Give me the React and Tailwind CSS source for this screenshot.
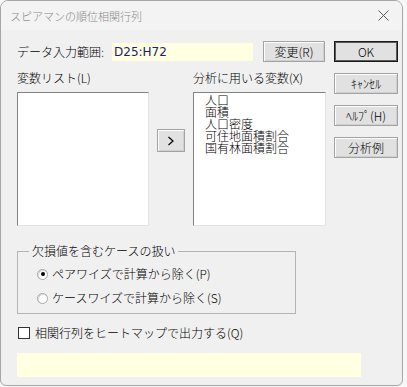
import React from 'react';

const Btn = ({ children, className = '', isDefault = false }) => (
  <div
    className={
      'flex items-center justify-center bg-[#e1e1e1] text-[12px] text-black ' +
      (isDefault
        ? 'border border-[#1a1a1a] shadow-[inset_0_0_0_1px_#5a5a5a] '
        : 'border border-[#a3a3a3] shadow-[inset_1px_1px_0_#fdfdfd,inset_-1px_-1px_0_#cfcfcf] ') +
      className
    }
  >
    {children}
  </div>
);

const ListBox = ({ items = [], className = '' }) => (
  <div
    className={
      'bg-white border-t border-l border-[#828282] border-r-[#e3e3e3] border-b-[#e3e3e3] border-r border-b pl-[11px] pt-[1px] ' +
      className
    }
  >
    {items.map((it) => (
      <div key={it} className="text-[12px] leading-[12px] text-black">
        {it}
      </div>
    ))}
  </div>
);

const Radio = ({ checked, label }) => (
  <div className="flex items-center h-[16px] gap-[4px]">
    <div className="w-[11px] h-[11px] rounded-full border border-[#a8a8a8] bg-white flex items-center justify-center shadow-[inset_1px_1px_0_#d8d8d8]">
      {checked && <div className="w-[4px] h-[4px] rounded-full bg-black" />}
    </div>
    <span className="text-[12px] leading-[16px]">{label}</span>
  </div>
);

export default function App() {
  const vars = ['人口', '面積', '人口密度', '可住地面積割合', '国有林面積割合'];

  return (
    <div className="w-[407px] h-[387px] bg-[#f7f7f7] font-[Noto_Sans_CJK_JP,sans-serif] font-light text-black">
      <div className="w-[403px] h-[386px] bg-[#f0f0f0] border border-[#a6a6a6] rounded-t-[8px] rounded-b-[6px] overflow-hidden">
        {/* title bar */}
        <div className="h-[29px] bg-[#f3f3f3] flex items-center justify-between pl-[9px] pr-[13px]">
          <span className="text-[11px] text-[#8a8a8a] leading-[16px]">スピアマンの順位相関行列</span>
          <svg width="11" height="11" viewBox="0 0 11 11">
            <path d="M0.5 0.5 L10.5 10.5 M10.5 0.5 L0.5 10.5" stroke="#5a5a5a" strokeWidth="1" />
          </svg>
        </div>

        <div className="pl-[16px]">
          <div className="flex pt-[11px]">
            {/* main column */}
            <div className="w-[309px]">
              <div className="flex items-center h-[21px]">
                <span className="w-[95px] text-[12px] leading-[16px]">データ入力範囲:</span>
                <div className="w-[141px] h-[18px] bg-[#ffffe1] flex items-center pl-[2px]">
                  <span className="font-[DejaVu_Sans,sans-serif] font-normal text-[12px] text-[#1c1c6c] leading-[16px]">D25:H72</span>
                </div>
                <Btn className="ml-[10px] w-[62px] h-[21px]">変更(R)</Btn>
              </div>

              <div className="flex mt-[8px] h-[16px] text-[12px] leading-[16px]">
                <span className="w-[176px]">変数リスト(L)</span>
                <span>分析に用いる変数(X)</span>
              </div>

              <div className="flex mt-[6px]">
                <ListBox className="w-[132px] h-[134px]" />
                <div className="w-[44px]">
                  <Btn className="ml-[8px] mt-[37px] w-[28px] h-[23px]">
                    <svg width="8" height="10" viewBox="0 0 8 10">
                      <path d="M1.5 1 L6 5 L1.5 9" stroke="#000" strokeWidth="1.2" fill="none" />
                    </svg>
                  </Btn>
                </div>
                <ListBox items={vars} className="w-[133px] h-[134px]" />
              </div>
            </div>

            {/* right buttons */}
            <div className="ml-[8px] w-[64px] flex flex-col gap-[11px]">
              <Btn isDefault className="h-[21px]">OK</Btn>
              <Btn className="h-[21px]">ｷｬﾝｾﾙ</Btn>
              <Btn className="h-[21px]">ﾍﾙﾌﾟ(H)</Btn>
              <Btn className="h-[21px]">分析例</Btn>
            </div>
          </div>

          {/* group box */}
          <div className="relative mt-[25px] w-[279px] h-[63px] border border-[#b4b4b4] pl-[19px] pt-[14px] flex flex-col gap-[8px]">
            <span className="absolute -top-[9px] left-[11px] px-[3px] bg-[#f0f0f0] text-[12px] leading-[16px]">
              欠損値を含むケースの扱い
            </span>
            <Radio checked label="ペアワイズで計算から除く(P)" />
            <Radio label="ケースワイズで計算から除く(S)" />
          </div>

          {/* checkbox */}
          <div className="flex items-center h-[16px] mt-[11px] gap-[5px]">
            <div className="ml-[1px] w-[12px] h-[12px] bg-white border border-[#333333]" />
            <span className="text-[12px] leading-[16px]">相関行列をヒートマップで出力する(Q)</span>
          </div>

          {/* status bar */}
          <div className="mt-[12px] w-[344px] h-[24px] bg-[#ffffe1]" />
        </div>
      </div>
    </div>
  );
}
